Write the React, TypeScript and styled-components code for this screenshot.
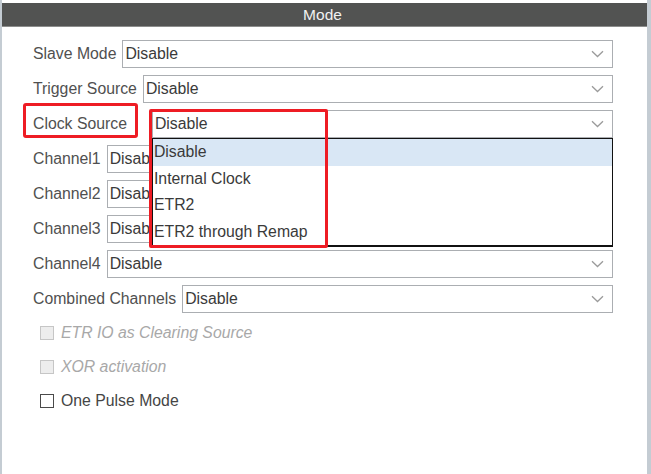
import React from "react";
import styled, { createGlobalStyle } from "styled-components";

const GlobalStyle = createGlobalStyle`
  html, body { margin: 0; padding: 0; background: #ffffff; }
  body { font-family: "Liberation Sans", Arial, sans-serif; }
  * { box-sizing: border-box; }
`;

const Panel = styled.div`
  width: 651px;
  height: 474px;
  border-left: 2px solid #c4ccd3;
  border-right: 4px solid #c4ccd3;
  padding-top: 3px;
  display: flex;
  flex-direction: column;
  background: #ffffff;
`;

const Header = styled.div`
  height: 24px;
  background: #525352;
  border-bottom: 1px solid #8c8d8c;
  color: #f2f2f2;
  font-size: 15.5px;
  display: flex;
  align-items: center;
  justify-content: center;
  padding-right: 4px;
`;

const Body = styled.div`
  padding: 13px 34px 0 31px;
  display: flex;
  flex-direction: column;
  gap: 7px;
  font-size: 15.8px;
`;

const Field = styled.div<{ $gap?: number }>`
  display: flex;
  align-items: stretch;
  height: 28px;
  gap: ${(p) => p.$gap ?? 6}px;
`;

const Label = styled.span<{ $marked?: boolean }>`
  display: flex;
  align-items: center;
  color: #505050;
  white-space: nowrap;
  position: relative;
  ${(p) =>
    p.$marked &&
    `
    &::before {
      content: "";
      position: absolute;
      left: -10px;
      right: -11px;
      top: -7px;
      bottom: 0;
      border: 3px solid #ee1c24;
      border-radius: 3px;
    }
  `}
`;

const Select = styled.div<{ $open?: boolean }>`
  flex: 1;
  position: relative;
  display: flex;
  align-items: center;
  justify-content: space-between;
  border: 1px solid #abaeb2;
  background: #ffffff;
  padding: 0 8px 0 2px;
  color: #3a3a3a;
  z-index: ${(p) => (p.$open ? 5 : 0)};
`;

const Value = styled.span`
  white-space: nowrap;
`;

const List = styled.div`
  position: absolute;
  left: -1px;
  right: -1px;
  top: 27px;
  border: 1px solid #111111;
  border-bottom-width: 2px;
  background: #ffffff;
  display: flex;
  flex-direction: column;
`;

const Option = styled.div<{ $active?: boolean }>`
  height: 26.5px;
  display: flex;
  align-items: center;
  padding-left: 1px;
  color: #3a3a3a;
  background: ${(p) => (p.$active ? "#d9e7f5" : "#ffffff")};
`;

const Marker = styled.div`
  position: absolute;
  left: -4px;
  top: -2px;
  width: 179px;
  height: 139px;
  border: 3px solid #ee1c24;
  border-radius: 2px;
  pointer-events: none;
  z-index: 6;
`;

const Checks = styled.div`
  display: flex;
  flex-direction: column;
  margin-top: -4px;
`;

const CheckRow = styled.div<{ $disabled?: boolean }>`
  height: 34px;
  display: flex;
  align-items: center;
  gap: 7px;
  padding-left: 7px;
  color: ${(p) => (p.$disabled ? "#a8a8a8" : "#454545")};
  font-style: ${(p) => (p.$disabled ? "italic" : "normal")};
`;

const Box = styled.span<{ $disabled?: boolean }>`
  width: 14px;
  height: 14px;
  border: 1px solid ${(p) => (p.$disabled ? "#c6c6c6" : "#4a4a4a")};
  background: ${(p) => (p.$disabled ? "#ededed" : "#ffffff")};
  flex: none;
`;

const Chevron = () => (
  <svg width="13" height="8" viewBox="0 0 13 8" fill="none">
    <path d="M1 1.2 L6.5 6.5 L12 1.2" stroke="#9b9b9b" strokeWidth="1.3" />
  </svg>
);

const fields = [
  "Slave Mode",
  "Trigger Source",
  "Clock Source",
  "Channel1",
  "Channel2",
  "Channel3",
  "Channel4",
  "Combined Channels",
];

const options = ["Disable", "Internal Clock", "ETR2", "ETR2 through Remap"];

export default function App() {
  return (
    <>
      <GlobalStyle />
      <Panel>
        <Header>Mode</Header>
        <Body>
          {fields.map((f) => {
            const clock = f === "Clock Source";
            return (
              <Field key={f} $gap={clock ? 25 : 6}>
                <Label $marked={clock}>{f}</Label>
                <Select $open={clock}>
                  <Value>Disable</Value>
                  <Chevron />
                  {clock && (
                    <>
                      <List>
                        {options.map((o, i) => (
                          <Option key={o} $active={i === 0}>
                            {o}
                          </Option>
                        ))}
                      </List>
                      <Marker />
                    </>
                  )}
                </Select>
              </Field>
            );
          })}
          <Checks>
            <CheckRow $disabled>
              <Box $disabled />
              ETR IO as Clearing Source
            </CheckRow>
            <CheckRow $disabled>
              <Box $disabled />
              XOR activation
            </CheckRow>
            <CheckRow>
              <Box />
              One Pulse Mode
            </CheckRow>
          </Checks>
        </Body>
      </Panel>
    </>
  );
}
